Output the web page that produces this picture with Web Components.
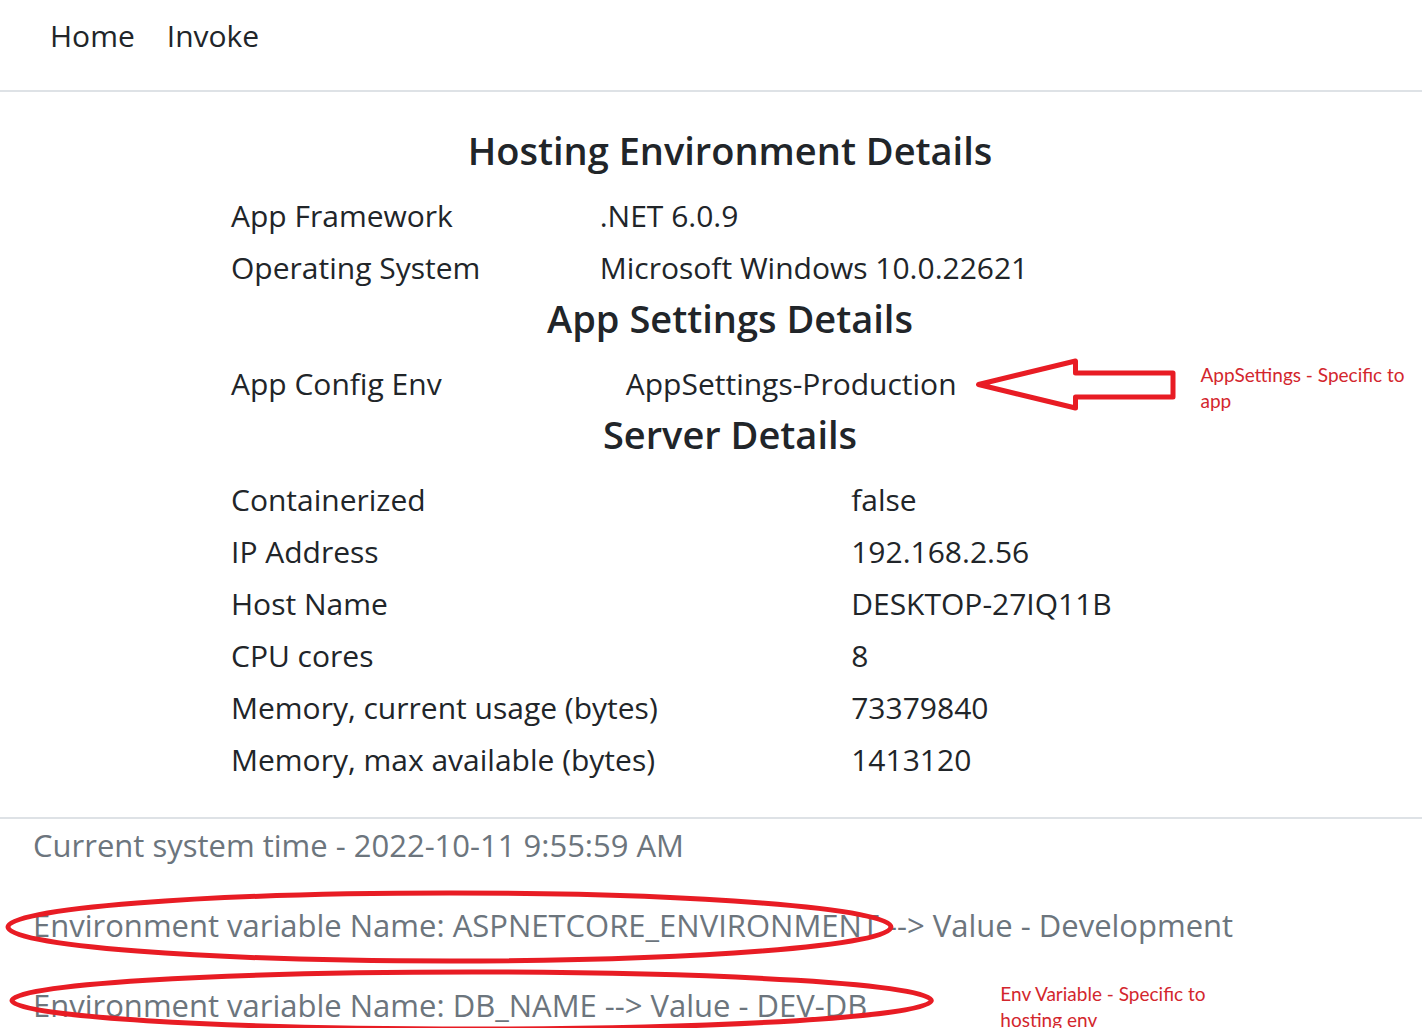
<!DOCTYPE html>
<html lang="en">
<head>
<meta charset="utf-8">
<title>Home</title>
<style>
body { margin: 0; background: #fff; color: #212529; font: 400 30px/48px "Open Sans", "Noto Sans", sans-serif; }
</style>
</head>
<body>
<app-nav><nav-link href="#home">Home</nav-link><nav-link href="#invoke">Invoke</nav-link></app-nav>
<app-main>
  <detail-table id="hosting" heading="Hosting Environment Details" style="--label-width:36.4%"></detail-table>
  <detail-table id="settings" heading="App Settings Details" style="--label-width:39%">
    <callout-arrow slot="callout"><side-note>AppSettings - Specific to app</side-note></callout-arrow>
  </detail-table>
  <detail-table id="server" heading="Server Details" style="--label-width:61.5%"></detail-table>
</app-main>
<app-footer>
  <footer-line>Current system time - 2022-10-11 9:55:59 AM</footer-line>
  <footer-line><ring-mark style="--ring:-8px -12px -12px -25px">Environment variable Name: ASPNETCORE_ENVIRONMENT</ring-mark> --&gt; Value - Development</footer-line>
  <footer-line><ring-mark style="--ring:-9px -64px 0 -21px">Environment variable Name: DB_NAME --&gt; Value - DEV-DB</ring-mark><side-note slot="aside">Env Variable - Specific to hosting env</side-note></footer-line>
</app-footer>
<script>
function define(name, html, setup) {
  customElements.define(name, class extends HTMLElement {
    constructor() {
      super();
      this.attachShadow({ mode: "open" }).innerHTML = html;
    }
    connectedCallback() { if (setup) setup(this, this.shadowRoot); }
  });
}

define("app-nav", `<style>
  :host { display: block; border-bottom: 2px solid #dee2e6; padding: 12px 50px 30px; }
  nav { display: flex; gap: 32px; }
</style><nav><slot></slot></nav>`);

define("nav-link", `<style>
  :host { display: block; }
  a { color: inherit; text-decoration: none; }
</style><a><slot></slot></a>`, (host, root) => {
  root.querySelector("a").href = host.getAttribute("href");
});

define("app-main", `<style>
  :host { display: block; padding: 34px 0 31px 38px; }
  main { max-width: 1002px; margin: 0 auto; }
</style><main><slot></slot></main>`);

const details = {
  hosting: [["App Framework", ".NET 6.0.9"], ["Operating System", "Microsoft Windows 10.0.22621"]],
  settings: [["App Config Env", "AppSettings-Production"]],
  server: [
    ["Containerized", "false"],
    ["IP Address", "192.168.2.56"],
    ["Host Name", "DESKTOP-27IQ11B"],
    ["CPU cores", "8"],
    ["Memory, current usage (bytes)", "73379840"],
    ["Memory, max available (bytes)", "1413120"]
  ]
};

define("detail-table", `<style>
  :host { display: block; }
  h2 { margin: 0 0 16px; font-size: 38px; line-height: 48px; font-weight: 600; text-align: center; }
  table { width: 100%; border-collapse: collapse; table-layout: fixed; }
  th, td { padding: 2px; text-align: left; font-weight: 400; white-space: nowrap; }
  th { width: var(--label-width); }
  .value { position: relative; display: inline-block; vertical-align: top; }
</style><h2></h2><table><tbody></tbody></table>`, (host, root) => {
  root.querySelector("h2").textContent = host.getAttribute("heading");
  root.querySelector("tbody").innerHTML = details[host.id].map(([label, value]) =>
    `<tr><th scope="row">${label}</th><td><span class="value">${value}<slot name="callout"></slot></span></td></tr>`).join("");
});

define("callout-arrow", `<style>
  :host { position: absolute; left: 100%; top: -3px; margin-left: 18px; display: flex; gap: 24px; }
  svg { flex: none; }
  .note { padding-top: 5px; }
</style>
<svg width="202" height="54" viewBox="0 0 202 54" aria-hidden="true"><path d="M3.500 27.500L100.500 4V16H198V40H100.500V51Z" fill="none" stroke="#e81c24" stroke-width="5" stroke-linejoin="round"/></svg>
<div class="note"><slot></slot></div>`);

define("side-note", `<style>
  :host { display: block; width: 212px; color: #d3262d; font: 400 19px/26px Lato, "Open Sans", sans-serif; white-space: normal; }
</style><slot></slot>`);

define("app-footer", `<style>
  :host { display: block; border-top: 2px solid #dee2e6; color: #6c757d; padding: 2px 33px 0; font-size: 31px; }
  footer { display: flex; flex-direction: column; gap: 32px; }
</style><footer><slot></slot></footer>`);

define("footer-line", `<style>
  :host { display: flex; gap: 133px; align-items: flex-start; height: 48px; }
  p { margin: 0; }
</style><p><slot></slot></p><slot name="aside"></slot>`);

define("ring-mark", `<style>
  :host { position: relative; display: inline-block; vertical-align: top; }
  .ring { position: absolute; inset: var(--ring); }
  svg { display: block; width: 100%; height: 100%; overflow: visible; }
</style><slot></slot><div class="ring"><svg aria-hidden="true"><ellipse cx="50%" cy="50%" rx="50%" ry="50%" fill="none" stroke="#e81c24" stroke-width="5"/></svg></div>`);
</script>
</body>
</html>
